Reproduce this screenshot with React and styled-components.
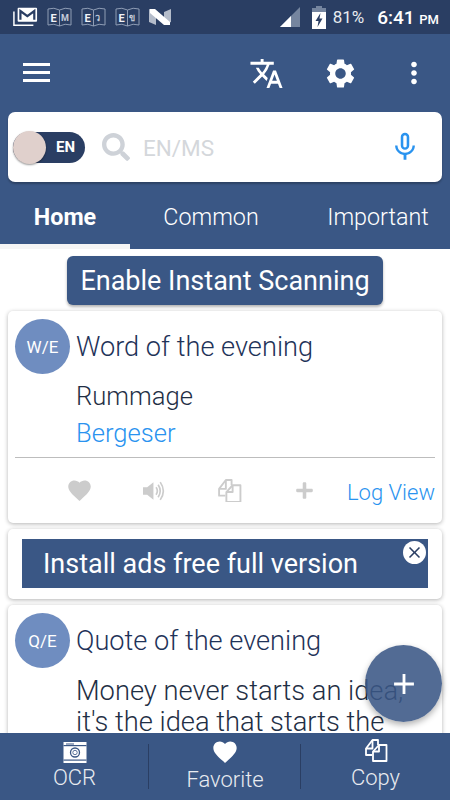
import React from "react";
import styled, { createGlobalStyle } from "styled-components";
import {
  MdTranslate,
  MdSettings,
  MdMoreVert,
  MdMicNone,
  MdFavorite,
  MdAdd,
  MdClose,
} from "react-icons/md";
import { FaSearch, FaPlus } from "react-icons/fa";

const GlobalStyle = createGlobalStyle`
  html, body {
    margin: 0;
    padding: 0;
    background: #fff;
    font-family: Roboto, "Liberation Sans", sans-serif;
  }
`;

function CopyIcon({ size = 24, color = "#fff" }) {
  return (
    <svg width={size} height={(size * 23) / 24} viewBox="0 1 24 23" fill="none" stroke={color} strokeWidth="1.8" strokeLinejoin="round">
      <path d="M8 17 H2 V10.5 L8.5 2 H14 V7" />
      <path d="M2 10.5 H8.5 V2" />
      <path d="M9 13.5 L15 7 H22.5 V23 H9 Z" />
      <path d="M15 7 V13.5 H9" />
    </svg>
  );
}

function VolumeIcon({ color }) {
  return (
    <svg width="24" height="24" viewBox="0 0 23 23" fill="none" stroke={color} strokeWidth="1.6">
      <path d="M0 8 H4 L10 3 V20 L4 15 H0 Z" fill={color} stroke="none" />
      <path d="M12.5 8 Q15 11.5 12.5 15" />
      <path d="M14.5 5.5 Q18.5 11.5 14.5 17.5" />
      <path d="M16.5 3 Q22.5 11.5 16.5 20" />
    </svg>
  );
}

function CameraIcon() {
  return (
    <svg width="24" height="21" viewBox="0 0 24 21">
      <rect x="0.5" y="0" width="23" height="21" fill="#fff" />
      <rect x="3" y="1.5" width="8" height="1" fill="#3a5785" />
      <rect x="0.5" y="3" width="23" height="1.2" fill="#3a5785" />
      <rect x="0.5" y="17.5" width="23" height="1.2" fill="#3a5785" />
      <circle cx="12" cy="10.5" r="4.5" fill="none" stroke="#3a5785" strokeWidth="1.3" />
      <circle cx="12" cy="10.5" r="2.2" fill="none" stroke="#3a5785" strokeWidth="0.8" />
    </svg>
  );
}

function BookIcon({ right }) {
  return (
    <svg width="25" height="20" viewBox="0 0 25 20">
      <path d="M1 2 Q7 0 12.5 3 Q18 0 24 2 V18 Q18 16 12.5 19 Q7 16 1 18 Z" fill="none" stroke="#8f9db5" strokeWidth="1" />
      <path d="M12.5 3 V19" stroke="#8f9db5" strokeWidth="1" />
      <text x="3.5" y="14.5" fontSize="11" fontWeight="700" fill="#f0f2f6" fontFamily="Roboto">E</text>
      <text x="14" y="14" fontSize="9" fontWeight="700" fill="#c3cad8" fontFamily="Roboto">{right}</text>
    </svg>
  );
}

function App() {
  return (
    <Screen>
      <GlobalStyle />
      <StatusBar>
        <StatusLeft>
          <svg width="25" height="22" viewBox="0 0 27 22">
            <path d="M1 5 V20 H22" fill="none" stroke="#fff" strokeWidth="1.6" />
            <rect x="5" y="1" width="21" height="15" rx="1" fill="#fff" />
            <path d="M8 14 V4.5 L15.5 10 L23 4.5 V14" fill="none" stroke="#2a3e63" strokeWidth="2.4" />
          </svg>
          <BookIcon right="M" />
          <BookIcon right="ว" />
          <BookIcon right="ข" />
          <svg width="22" height="18" viewBox="0 0 22 18">
            <path d="M0 1 L7 3 V17 L0 14 Z M15 4 L22 1 V14 L15 17 Z" fill="#b4bcca" />
            <path d="M1 1 H6 L21 14 V17 H15 L1 5 Z" fill="#fff" />
          </svg>
        </StatusLeft>
        <StatusRight>
          <Signal width="20" height="20" viewBox="0 0 20 20">
            <path d="M0 20 L20 0 V20 Z" fill="#75859f" />
            <path d="M0 20 L11 9 V20 Z" fill="#fff" />
          </Signal>
          <svg width="14" height="23" viewBox="0 0 14 23">
            <rect x="4" y="0" width="6" height="3" fill="#75859f" />
            <rect x="0" y="2" width="14" height="5" fill="#75859f" />
            <rect x="0" y="6" width="14" height="17" fill="#fff" />
            <path d="M8.5 7 L3.5 15 H6.5 L5.5 21 L10.5 12.5 H7.5 Z" fill="#2a3e63" />
          </svg>
          <Battery>81%</Battery>
          <Clock>
            6:41 <small>PM</small>
          </Clock>
        </StatusRight>
      </StatusBar>

      <Header>
        <Toolbar>
          <MenuButton>
            <span />
            <span />
            <span />
          </MenuButton>
          <ToolIcons>
            <MdTranslate size={35} />
            <MdSettings size={35} />
            <MdMoreVert size={34} />
          </ToolIcons>
        </Toolbar>

        <SearchCard>
          <Toggle>
            <Knob />
            <ToggleLabel>EN</ToggleLabel>
          </Toggle>
          <FaSearch size={28} color="#ced2d8" />
          <SearchText>EN/MS</SearchText>
          <MdMicNone size={34} color="#2a93ef" />
        </SearchCard>

        <Tabs>
          <Tab $active>Home</Tab>
          <Tab>Common</Tab>
          <Tab>Important</Tab>
        </Tabs>
      </Header>

      <Content>
        <ScanButton>Enable Instant Scanning</ScanButton>

        <Card>
          <CardHead>
            <Avatar>W/E</Avatar>
            <CardTitle>Word of the evening</CardTitle>
          </CardHead>
          <WordBody>
            <Word>Rummage</Word>
            <WordLink>Bergeser</WordLink>
          </WordBody>
          <Actions>
            <MdFavorite size={27} color="#cccccc" />
            <VolumeIcon color="#cccccc" />
            <CopyIcon size={25} color="#cccccc" />
            <FaPlus size={19} color="#cccccc" />
            <LogLink>Log View</LogLink>
          </Actions>
        </Card>

        <AdCard>
          <AdBanner>
            Install ads free full version
            <CloseBadge>
              <MdClose size={19} />
            </CloseBadge>
          </AdBanner>
        </AdCard>

        <Card>
          <CardHead>
            <Avatar>Q/E</Avatar>
            <CardTitle>Quote of the evening</CardTitle>
          </CardHead>
          <Quote>Money never starts an idea, it's the idea that starts the money.</Quote>
        </Card>

        <Fab>
          <MdAdd size={34} />
        </Fab>
      </Content>

      <BottomBar>
        <BottomItem $top={9}>
          <CameraIcon />
          <BottomLabel>OCR</BottomLabel>
        </BottomItem>
        <BottomItem $top={5}>
          <MdFavorite size={28} color="#fff" />
          <BottomLabel $shift={-1}>Favorite</BottomLabel>
        </BottomItem>
        <BottomItem $top={6}>
          <CopyIcon />
          <BottomLabel $shift={1}>Copy</BottomLabel>
        </BottomItem>
      </BottomBar>
    </Screen>
  );
}

export default App;

const Screen = styled.div`
  width: 450px;
  height: 800px;
  overflow: hidden;
  display: flex;
  flex-direction: column;
  background: #fff;
`;

const StatusBar = styled.div`
  height: 34px;
  flex: none;
  background: #2a3e63;
  display: flex;
  align-items: center;
  justify-content: space-between;
  padding: 0 11px 0 13px;
  box-sizing: border-box;
`;

const StatusLeft = styled.div`
  display: flex;
  align-items: center;
  gap: 9px;
`;

const StatusRight = styled.div`
  display: flex;
  align-items: center;
  gap: 6px;
  color: #e8ebf0;
`;

const Signal = styled.svg`
  margin-right: 6px;
`;

const Battery = styled.span`
  font-size: 17px;
  margin-left: 1px;
`;

const Clock = styled.span`
  font-size: 19px;
  font-weight: 500;
  margin-left: 7px;
  color: #fff;

  small {
    font-size: 13px;
    font-weight: 500;
  }
`;

const Header = styled.div`
  flex: none;
  background: #3a5785;
  height: 215px;
  display: flex;
  flex-direction: column;
`;

const Toolbar = styled.div`
  height: 78px;
  flex: none;
  display: flex;
  align-items: center;
  justify-content: space-between;
  padding: 0 19px 0 23px;
  color: #fff;
`;

const MenuButton = styled.div`
  display: flex;
  flex-direction: column;
  gap: 5px;
  width: 27px;
  margin-bottom: 2px;

  span {
    height: 3px;
    background: #fff;
  }
`;

const ToolIcons = styled.div`
  display: flex;
  align-items: center;
  gap: 39px;
`;

const SearchCard = styled.div`
  margin: 0 8px;
  height: 70px;
  flex: none;
  background: #fff;
  border-radius: 7px;
  box-shadow: 0 2px 2px rgba(0, 0, 0, 0.25);
  display: flex;
  align-items: center;
  padding: 0 20px 0 5px;
`;

const Toggle = styled.div`
  position: relative;
  width: 72px;
  height: 31px;
  background: #2a3e63;
  border-radius: 16px;
  display: flex;
  align-items: center;
  justify-content: flex-end;
  padding-right: 10px;
  box-sizing: border-box;
  margin-right: 17px;
`;

const Knob = styled.div`
  position: absolute;
  left: 0;
  top: -1px;
  width: 33px;
  height: 33px;
  border-radius: 50%;
  background: #e0d0cc;
  box-shadow: 0 1px 2px rgba(0, 0, 0, 0.4);
`;

const ToggleLabel = styled.span`
  color: #fff;
  font-size: 15px;
  font-weight: 700;
`;

const SearchText = styled.div`
  flex: 1;
  margin-left: 13px;
  padding-top: 2px;
  font-size: 22.5px;
  color: #d4d7db;
`;

const Tabs = styled.div`
  flex: 1;
  display: grid;
  grid-template-columns: 130px 162px 172px;
`;

const Tab = styled.div`
  display: flex;
  align-items: center;
  justify-content: center;
  color: #fff;
  font-size: 23.3px;
  font-weight: ${(props) => (props.$active ? 700 : 300)};
  box-sizing: border-box;
  padding-top: 7px;
  border-bottom: 5px solid ${(props) => (props.$active ? "#f5f5f5" : "transparent")};
`;

const Content = styled.div`
  position: relative;
  flex: 1;
  min-height: 0;
  overflow: hidden;
  display: flex;
  flex-direction: column;
  align-items: stretch;
  gap: 6px;
  padding: 7px 8px 0;
`;

const ScanButton = styled.div`
  align-self: center;
  flex: none;
  width: 316px;
  height: 49px;
  border-radius: 6px;
  background: #3a5785;
  color: #fff;
  font-size: 27px;
  display: flex;
  align-items: center;
  justify-content: center;
  box-shadow: 0 2px 3px rgba(0, 0, 0, 0.3);
`;

const Card = styled.div`
  flex: none;
  background: #fff;
  border-radius: 5px;
  box-shadow: 0 1px 4px rgba(0, 0, 0, 0.3);
  padding: 8px 7px 0;
`;

const CardHead = styled.div`
  display: flex;
  align-items: center;
  gap: 6px;
`;

const Avatar = styled.div`
  width: 55px;
  height: 55px;
  flex: none;
  border-radius: 50%;
  background: #6f8dc0;
  color: #fff;
  font-size: 17px;
  display: flex;
  align-items: center;
  justify-content: center;
`;

const CardTitle = styled.div`
  font-size: 27.2px;
  font-weight: 300;
  color: #1f3359;
  padding-top: 1px;
`;

const WordBody = styled.div`
  padding: 4px 0 5px 61px;
  font-size: 25.6px;
  line-height: 37px;
  font-weight: 300;
`;

const Word = styled.div`
  color: #1f2f45;
`;

const WordLink = styled.div`
  color: #2a93ef;
`;

const Actions = styled.div`
  border-top: 1px solid #bdbdbd;
  height: 66px;
  box-sizing: border-box;
  padding-left: 27px;
  display: grid;
  grid-template-columns: repeat(4, 75px) 1fr;
  justify-items: center;
  align-items: center;
`;

const LogLink = styled.div`
  color: #2a93ef;
  font-size: 22px;
  font-weight: 300;
  justify-self: end;
  white-space: nowrap;
  padding-top: 3px;
`;

const AdCard = styled(Card)`
  padding: 10px 14px 11px;
`;

const AdBanner = styled.div`
  position: relative;
  height: 49px;
  background: #3a5785;
  color: #fff;
  font-size: 27px;
  display: flex;
  align-items: center;
  padding-left: 21px;
`;

const CloseBadge = styled.div`
  position: absolute;
  right: 2px;
  top: 2px;
  width: 23px;
  height: 23px;
  border-radius: 50%;
  background: #fff;
  color: #2a3e63;
  display: flex;
  align-items: center;
  justify-content: center;
`;

const Quote = styled.div`
  padding: 8px 0 0 61px;
  font-size: 27.3px;
  line-height: 31px;
  font-weight: 300;
  color: #1f2f45;
`;

const Fab = styled.div`
  position: absolute;
  right: 8px;
  bottom: 11px;
  width: 77px;
  height: 77px;
  border-radius: 50%;
  background: rgba(58, 87, 133, 0.88);
  color: #fff;
  display: flex;
  align-items: center;
  justify-content: center;
  box-shadow: 0 3px 6px rgba(0, 0, 0, 0.3);
`;

const BottomBar = styled.div`
  flex: none;
  height: 67px;
  background: #3a5785;
  display: grid;
  grid-template-columns: 149px 152px 149px;
  position: relative;
  z-index: 1;
`;

const BottomItem = styled.div`
  position: relative;
  box-sizing: border-box;
  height: 67px;
  padding-top: ${(props) => props.$top}px;
  display: flex;
  flex-direction: column;
  align-items: center;
  gap: 2px;

  svg {
    flex: none;
  }

  &:not(:last-child)::after {
    content: "";
    position: absolute;
    right: 0;
    top: 11px;
    bottom: 11px;
    width: 1px;
    background: #2a3e63;
  }
`;

const BottomLabel = styled.div`
  color: #e8ebf0;
  font-size: 22px;
  font-weight: 300;
  line-height: 26px;
  margin-top: ${(props) => props.$shift || 0}px;
`;
